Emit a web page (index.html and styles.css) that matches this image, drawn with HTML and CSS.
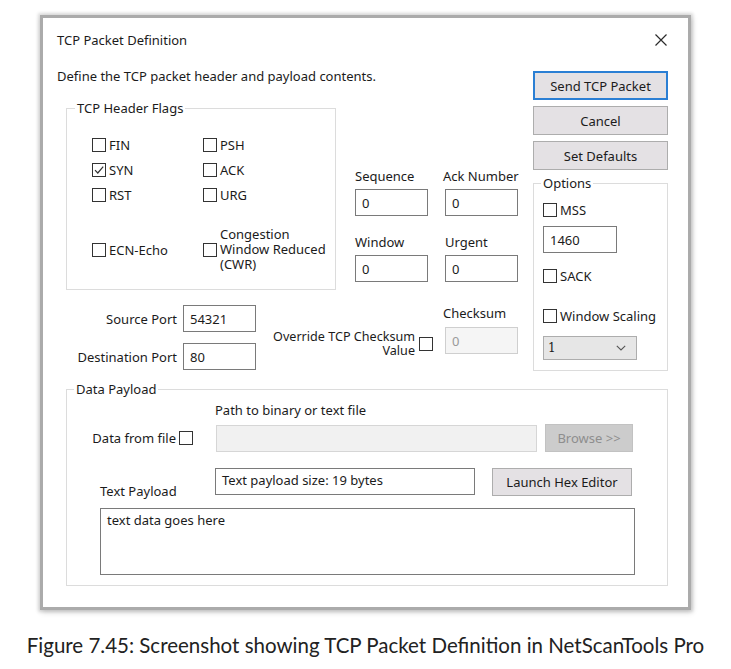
FILE: index.html
```html
<!DOCTYPE html>
<html>
<head>
<meta charset="utf-8">
<title>TCP Packet Definition</title>
<link rel="stylesheet" href="styles.css">
</head>
<body>
<div class="page">
  <div class="dialog">
    <div class="titlebar">
      <span class="title">TCP Packet Definition</span>
      <svg class="close" width="12" height="12" viewBox="0 0 12 12"><path d="M0.5 0.5L11.5 11.5M11.5 0.5L0.5 11.5" stroke="#2b2b2b" stroke-width="1.2" fill="none"/></svg>
    </div>
    <div class="dbody">
      <div class="top">
        <div class="leftcol">
          <div class="intro">Define the TCP packet header and payload contents.</div>
          <div class="row1">
            <fieldset class="group flags">
              <legend>TCP Header Flags</legend>
              <div class="flaggrid">
                <div class="chk"><span class="cb"></span><span>FIN</span></div>
                <div class="chk"><span class="cb"></span><span>PSH</span></div>
                <div class="chk"><span class="cb"><svg width="12" height="12" viewBox="0 0 12 12"><path d="M2 6.2L4.8 9L10.2 2.6" stroke="#333" stroke-width="1.2" fill="none"/></svg></span><span>SYN</span></div>
                <div class="chk"><span class="cb"></span><span>ACK</span></div>
                <div class="chk"><span class="cb"></span><span>RST</span></div>
                <div class="chk"><span class="cb"></span><span>URG</span></div>
                <div class="chk last"><span class="cb"></span><span>ECN-Echo</span></div>
                <div class="chk last"><span class="cb"></span><span class="ml"><span>Congestion</span><span>Window Reduced</span><span>(CWR)</span></span></div>
              </div>
            </fieldset>
            <div class="hdrfields">
              <div class="fld"><div class="lbl">Sequence</div><div class="tb">0</div></div>
              <div class="fld"><div class="lbl lbl-shift">Ack Number</div><div class="tb">0</div></div>
              <div class="fld"><div class="lbl">Window</div><div class="tb">0</div></div>
              <div class="fld"><div class="lbl">Urgent</div><div class="tb">0</div></div>
            </div>
          </div>
          <div class="row2">
            <div class="ports">
              <div class="plbl">Source Port</div><div class="tb">54321</div>
              <div class="plbl">Destination Port</div><div class="tb">80</div>
            </div>
            <div class="override">
              <span class="otext"><span>Override TCP Checksum</span><span>Value</span></span>
              <span class="cb"></span>
            </div>
            <div class="cksum">
              <div class="lbl lbl-shift">Checksum</div>
              <div class="tb disabled">0</div>
            </div>
          </div>
        </div>
        <div class="rightcol">
          <div class="btn default">Send TCP Packet</div>
          <div class="btn">Cancel</div>
          <div class="btn">Set Defaults</div>
          <fieldset class="group options">
            <legend>Options</legend>
            <div class="optbody">
              <div class="chk"><span class="cb"></span><span>MSS</span></div>
              <div class="tb mss">1460</div>
              <div class="chk sack"><span class="cb"></span><span>SACK</span></div>
              <div class="chk wscale"><span class="cb"></span><span>Window Scaling</span></div>
              <div class="dd"><span class="ddval">1</span><svg width="10" height="6" viewBox="0 0 10 6"><path d="M0.8 0.8L5 5L9.2 0.8" stroke="#555" stroke-width="1.1" fill="none"/></svg></div>
            </div>
          </fieldset>
        </div>
      </div>
      <fieldset class="group payload">
        <legend>Data Payload</legend>
        <div class="paybody">
          <div class="pathlbl">Path to binary or text file</div>
          <div class="prow">
            <div class="dff"><span>Data from file</span><span class="cb"></span></div>
            <div class="tb path"></div>
            <div class="btn browse">Browse &gt;&gt;</div>
          </div>
          <div class="trow">
            <div class="tplbl">Text Payload</div>
            <div class="tb size">Text payload size: 19 bytes</div>
            <div class="btn hex">Launch Hex Editor</div>
          </div>
          <div class="textarea">text data goes here</div>
        </div>
      </fieldset>
    </div>
  </div>
  <p class="caption">Figure 7.45: Screenshot showing TCP Packet Definition in NetScanTools Pro</p>
</div>
</body>
</html>
```

FILE: styles.css
```css
* { box-sizing: border-box; }
html, body { margin: 0; padding: 0; background: #fff; }
body {
  width: 731px;
  height: 669px;
  overflow: hidden;
  font-family: "Noto Sans", "Open Sans", sans-serif;
  font-size: 13px;
  line-height: 16px;
  color: #1b1b1b;
}
.page { padding-top: 15px; }
.dialog {
  margin-left: 40px;
  width: 651px;
  height: 595px;
  border: 3px solid #ababab;
  box-shadow: 0 0 3px 2px rgba(0,0,0,0.12), 1px 2px 6px rgba(0,0,0,0.18);
  background: #fff;
  overflow: hidden;
}
.titlebar {
  height: 44px;
  display: flex;
  align-items: center;
  justify-content: space-between;
  padding: 0 21px 0 14px;
}
.title { font-size: 13px; }
.dbody { padding: 0 20px 0 14px; }
.top { display: flex; }
.leftcol { width: 476px; }
.rightcol { width: 135px; margin-top: 9px; }
.intro { margin-top: 5px; line-height: 18px; white-space: nowrap; }

.group {
  margin: 0;
  padding: 0;
  min-width: 0;
  border: 1px solid #dcdcdc;
}
.group legend {
  padding: 0 2px;
  line-height: 16px;
  white-space: nowrap;
}

.row1 { display: flex; align-items: flex-start; }
.flags {
  margin: 15px 0 0 9px;
  width: 270px;
  height: 190px;
  flex: none;
}
.flags legend { margin-left: 8px; }
.flaggrid {
  display: grid;
  grid-template-columns: 111px auto;
  row-gap: 9px;
  align-items: center;
  padding: 21px 0 0 25px;
}
.chk { display: flex; align-items: center; gap: 3px; line-height: 16px; white-space: nowrap; }
.chk.last { margin-top: 15px; }
.ml { display: flex; flex-direction: column; }
.ml span { display: block; height: 15px; line-height: 15px; }
.cb {
  width: 14px;
  height: 14px;
  flex: none;
  border: 1px solid #333;
  background: #fff;
  display: flex;
  align-items: center;
  justify-content: center;
}

.hdrfields {
  margin: 83px 0 0 19px;
  display: grid;
  grid-template-columns: 73px 73px;
  column-gap: 17px;
  row-gap: 18px;
}
.lbl { line-height: 16px; white-space: nowrap; }
.lbl-shift { margin-left: -2px; }
.tb {
  height: 27px;
  border: 1px solid #7a7a7a;
  background: #fff;
  padding: 5px 6px 0;
  line-height: 16px;
  white-space: nowrap;
  overflow: hidden;
}
.fld .tb { margin-top: 5px; }
.tb.disabled { border-color: #cfcfcf; background: #f5f5f5; color: #9a9a9a; }

.row2 { display: flex; align-items: flex-start; margin-top: 15px; }
.ports {
  display: grid;
  grid-template-columns: 120px 73px;
  column-gap: 6px;
  row-gap: 11px;
  align-items: center;
  flex: none;
}
.plbl { text-align: right; white-space: nowrap; }
.override {
  flex: 1;
  display: flex;
  justify-content: flex-end;
  align-items: center;
  gap: 4px;
  margin-top: 25px;
}
.otext { display: flex; flex-direction: column; align-items: flex-end; font-size: 12.6px; white-space: nowrap; }
.otext span { display: block; height: 14px; line-height: 14px; }
.cksum { width: 73px; margin: 0 15px 0 12px; flex: none; }
.cksum .tb { margin-top: 6px; }

.btn {
  display: flex;
  align-items: center;
  justify-content: center;
  height: 29px;
  background: #e4e1e4;
  border: 1px solid #adadad;
  white-space: nowrap;
}
.rightcol .btn + .btn { margin-top: 6px; }
.btn.default { border: 2px solid #2b7fd4; }

.options { margin-top: 5px; width: 135px; height: 196px; }
.options legend { margin-left: 7px; }
.optbody { padding: 11px 0 0 9px; }
.tb.mss { width: 74px; margin-top: 8px; }
.chk.sack { margin-top: 15px; }
.chk.wscale { margin-top: 24px; }
.dd {
  margin-top: 12px;
  width: 94px;
  height: 24px;
  border: 1px solid #adadad;
  background: #e6e6e6;
  display: flex;
  align-items: center;
  justify-content: space-between;
  padding: 0 10px 0 4px;
}
.ddval { font-family: "DejaVu Serif", serif; font-size: 12px; }

.payload { margin: 10px 0 0 9px; width: 602px; height: 205px; }
.payload legend { margin-left: 7px; }
.paybody { padding-top: 5px; }
.pathlbl { margin-left: 148px; }
.prow { display: flex; align-items: center; margin-top: 6px; }
.dff { width: 126px; display: flex; justify-content: flex-end; align-items: center; gap: 3px; white-space: nowrap; }
.tb.path { width: 321px; margin-left: 23px; border-color: #d6d6d6; background: #f1f1f1; }
.btn.browse { width: 88px; height: 28px; margin-left: 8px; background: #cccccc; border-color: #c2c2c2; color: #8e8e8e; }
.trow { display: flex; align-items: flex-start; margin-top: 16px; }
.tplbl { width: 148px; padding: 15px 0 0 33px; white-space: nowrap; }
.tb.size { width: 260px; padding-top: 3px; }
.btn.hex { width: 140px; height: 28px; margin-left: 17px; }
.textarea {
  margin: 9px 0 0 33px;
  width: 535px;
  height: 67px;
  border: 1px solid #7a7a7a;
  padding: 3px 6px;
}

.caption {
  margin: 23px 0 0;
  width: 731px;
  text-align: center;
  font-family: "Lato", sans-serif;
  font-size: 20.5px;
  line-height: 24px;
  color: #222;
}
```
